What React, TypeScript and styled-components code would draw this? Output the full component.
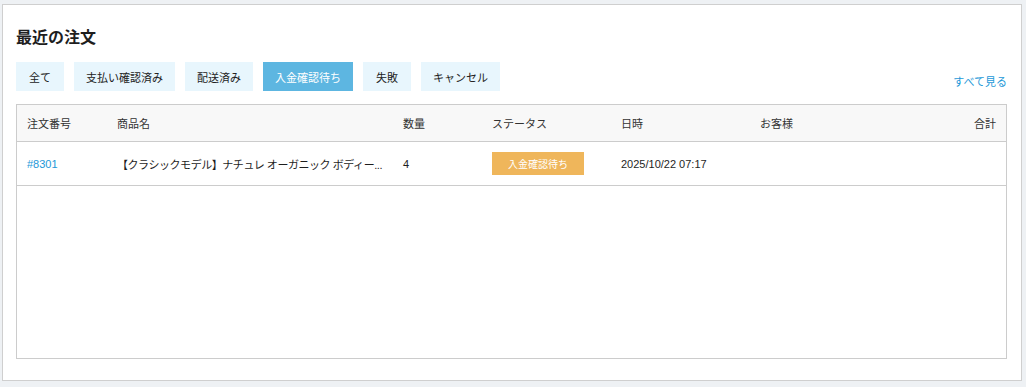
import styled, { createGlobalStyle } from 'styled-components';

const GlobalStyle = createGlobalStyle`
  * { box-sizing: border-box; }
  body {
    margin: 0;
    background: #eef1f4;
    font-family: "Liberation Sans", "Noto Sans CJK JP", sans-serif;
    color: #222;
  }
`;

const Page = styled.div`
  padding: 4px 4px 6px 2px;
`;

const Card = styled.section`
  background: #fff;
  border: 1px solid #cfcfcf;
  padding: 21px 14px 21px 13px;
`;

const Title = styled.h2`
  margin: 0;
  font-size: 16px;
  line-height: 24px;
  font-weight: 700;
  color: #1e1e1e;
`;

const Toolbar = styled.div`
  margin-top: 12px;
  display: flex;
  align-items: flex-end;
  justify-content: space-between;
`;

const Tabs = styled.div`
  display: flex;
  gap: 10px;
`;

const Tab = styled.button<{ $active?: boolean }>`
  height: 29px;
  min-width: 48px;
  padding: 0 12px;
  border: none;
  font-family: inherit;
  font-size: 11px;
  background: ${(p) => (p.$active ? '#5db6e1' : '#e8f6fd')};
  color: ${(p) => (p.$active ? '#fff' : '#222')};
  cursor: pointer;
`;

const SeeAll = styled.a`
  font-size: 11px;
  line-height: 14px;
  margin-bottom: 2px;
  color: #1d98d8;
  text-decoration: none;
`;

const Table = styled.div`
  margin-top: 13px;
  height: 255px;
  border: 1px solid #cccccc;
`;

const Row = styled.div<{ $head?: boolean }>`
  display: grid;
  grid-template-columns: 90px 286px 89px 129px 139px 1fr 80px;
  align-items: center;
  height: ${(p) => (p.$head ? '37px' : '44px')};
  background: ${(p) => (p.$head ? '#f8f8f8' : '#fff')};
  border-bottom: 1px solid #cccccc;
  font-size: 11px;
  color: ${(p) => (p.$head ? '#333' : '#1e1e1e')};
`;

const Cell = styled.div<{ $right?: boolean }>`
  padding: 0 10px;
  text-align: ${(p) => (p.$right ? 'right' : 'left')};
  white-space: nowrap;
`;

const ProductCell = styled(Cell)`
  letter-spacing: -0.45px;
  overflow: visible;
`;

const OrderLink = styled.a`
  color: #1d98d8;
  text-decoration: none;
`;

const Badge = styled.span`
  display: inline-flex;
  align-items: center;
  height: 23px;
  padding: 0 16px;
  background: #efb65b;
  color: #fff;
  font-size: 10px;
`;

const tabs = ['全て', '支払い確認済み', '配送済み', '入金確認待ち', '失敗', 'キャンセル'];

export default function App() {
  return (
    <Page>
      <GlobalStyle />
      <Card>
        <Title>最近の注文</Title>
        <Toolbar>
          <Tabs>
            {tabs.map((t) => (
              <Tab key={t} $active={t === '入金確認待ち'}>{t}</Tab>
            ))}
          </Tabs>
          <SeeAll href="#">すべて見る</SeeAll>
        </Toolbar>
        <Table>
          <Row $head>
            <Cell>注文番号</Cell>
            <Cell>商品名</Cell>
            <Cell>数量</Cell>
            <Cell>ステータス</Cell>
            <Cell>日時</Cell>
            <Cell>お客様</Cell>
            <Cell $right>合計</Cell>
          </Row>
          <Row>
            <Cell><OrderLink href="#">#8301</OrderLink></Cell>
            <ProductCell>【クラシックモデル】ナチュレ オーガニック ボディー...</ProductCell>
            <Cell>4</Cell>
            <Cell><Badge>入金確認待ち</Badge></Cell>
            <Cell>2025/10/22 07:17</Cell>
            <Cell></Cell>
            <Cell $right></Cell>
          </Row>
        </Table>
      </Card>
    </Page>
  );
}
